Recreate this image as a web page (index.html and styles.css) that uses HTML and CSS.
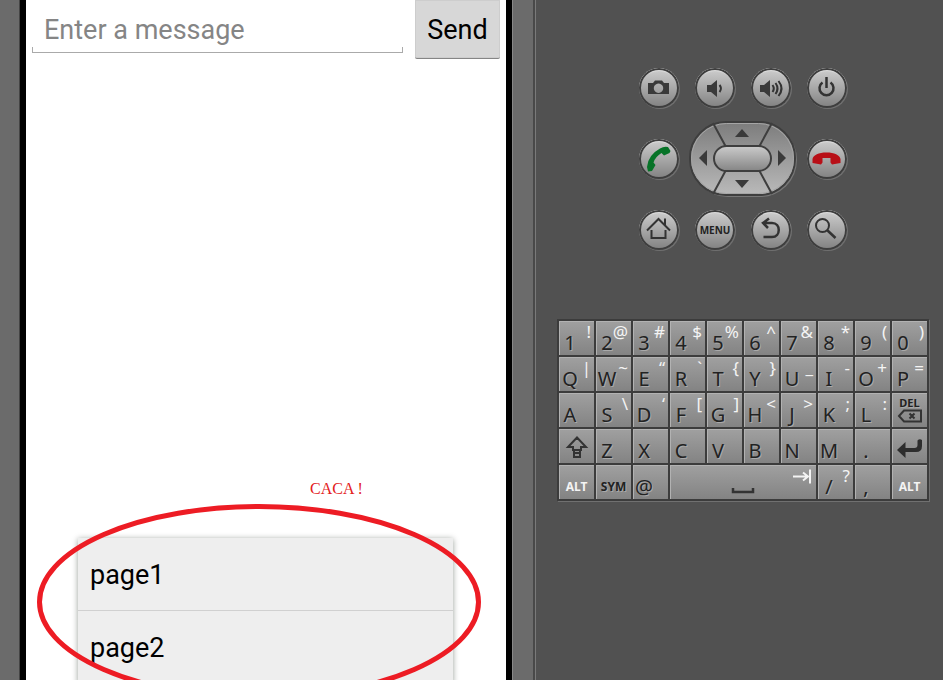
FILE: index.html
```html
<!DOCTYPE html>
<html lang="en">
<head>
  <meta charset="UTF-8">
  <title>Emulator</title>
  <link rel="stylesheet" href="styles.css">
</head>
<body>

  <div class="emulator">

    <!-- Phone -->
    <div class="phone">
      <main class="screen">
        <form class="message-bar">
          <div class="field">
            <input type="text" placeholder="Enter a message" aria-label="Enter a message">
          </div>
          <button type="button" class="send">Send</button>
        </form>

        <div class="content">
          <p class="note">CACA !</p>
        </div>

        <div class="popup">
          <button class="popup-item">page1</button>
          <button class="popup-item">page2</button>
          <svg class="circle-mark" viewBox="0 0 444 196" aria-hidden="true">
            <ellipse cx="222" cy="98" rx="219.500" ry="95.500"/>
          </svg>
        </div>
      </main>
    </div>

    <!-- Hardware controls -->
    <div class="panel">
      <div class="controls">
        <button class="round" aria-label="Camera">
          <svg viewBox="0 0 40 40"><path class="solid" fill-rule="evenodd" d="M9 15h5l2-2.500h7l2 2.500h5v11H9zM19.500 15.500a4.700 4.700 0 1 0 .01 0z"/></svg>
        </button>
        <button class="round" aria-label="Volume down">
          <svg viewBox="0 0 40 40"><path class="solid" d="M12 17h4l6-5v17l-6-5h-4z"/><path class="line" d="M24.500 17q3 3.500 0 7"/></svg>
        </button>
        <button class="round" aria-label="Volume up">
          <svg viewBox="0 0 40 40"><path class="solid" d="M9 17h4l6-5v17l-6-5H9z"/><path class="line" d="M21.500 17q2.500 3.500 0 7M24.500 15q4 5.500 0 11M27.500 13q6 7.500 0 15"/></svg>
        </button>
        <button class="round" aria-label="Power">
          <svg viewBox="0 0 40 40"><path class="line thick" d="M15.500 14.500a7 7 0 1 0 8 0M19.500 9v11"/></svg>
        </button>

        <button class="round" aria-label="Call">
          <svg viewBox="0 0 40 40"><path class="call" d="M21 9.500q4-2.500 8-1.500l2.500 4-1 2-5.500 2.500-2.500-2.500q-6 3.500-8 9.500l2 2.500-3.500 6-4 .5-1-4.500Q9 16 21 9.500z"/></svg>
        </button>
        <div class="dpad">
          <svg viewBox="0 0 108 76" aria-hidden="true">
            <defs>
              <linearGradient id="pad" x1="0" y1="0" x2="0" y2="1">
                <stop offset="0" stop-color="#7c7c7c"/>
                <stop offset="1" stop-color="#bababa"/>
              </linearGradient>
              <linearGradient id="pill" x1="0" y1="0" x2="0" y2="1">
                <stop offset="0" stop-color="#cbcbcb"/>
                <stop offset="1" stop-color="#858585"/>
              </linearGradient>
            </defs>
            <rect x="2" y="2" width="106" height="74" rx="37" fill="#777"/>
            <rect class="edge" x="1" y="1" width="105" height="73" rx="36" fill="url(#pad)"/>
            <rect class="shine" x="2.500" y="2.500" width="102" height="70" rx="35"/>
            <path class="edge" d="M24 2l13 24M83 2L70 26M37 49L24 73M70 49l13 24"/>
            <rect class="edge" x="25" y="25" width="57" height="25" rx="12.500" fill="url(#pill)"/>
            <path class="arrow" d="M46 16h14l-7-8zM46 59h14l-7 8zM10 37l8-8v16zM97 37l-8-8v16z"/>
          </svg>
          <button class="up" aria-label="Up"></button>
          <button class="left" aria-label="Left"></button>
          <button class="ok" aria-label="Select"></button>
          <button class="right" aria-label="Right"></button>
          <button class="down" aria-label="Down"></button>
        </div>
        <button class="round" aria-label="End call">
          <svg viewBox="0 0 40 40"><path class="hangup" d="M5.500 20c1-4 6-6.500 14-6.500s13 2.500 14 6.500v4l-8.500 1.500-1.500-2v-4.500h-8v4.500l-1.500 2L5.500 24z"/></svg>
        </button>

        <button class="round" aria-label="Home">
          <svg viewBox="0 0 40 40"><path class="line" d="M8 20.500L19.500 9 31 20.500M26 15V8.500M12.500 20v8h14v-8"/></svg>
        </button>
        <button class="round">MENU</button>
        <button class="round" aria-label="Back">
          <svg viewBox="0 0 40 40"><path class="line thick" d="M18 8.500l-6 4.500 5 5M12 13h9c9 0 9 14 0 14h-8.500"/></svg>
        </button>
        <button class="round" aria-label="Search">
          <svg viewBox="0 0 40 40"><circle class="line" cx="15.500" cy="15.500" r="6.500"/><path class="line thick" d="M20 20l8.500 8"/></svg>
        </button>
      </div>

      <!-- Keyboard -->
      <div class="keyboard">
        <button class="key"><span>1</span><sup>!</sup></button>
        <button class="key"><span>2</span><sup>@</sup></button>
        <button class="key"><span>3</span><sup>#</sup></button>
        <button class="key"><span>4</span><sup>$</sup></button>
        <button class="key"><span>5</span><sup>%</sup></button>
        <button class="key"><span>6</span><sup>^</sup></button>
        <button class="key"><span>7</span><sup>&amp;</sup></button>
        <button class="key"><span>8</span><sup>*</sup></button>
        <button class="key"><span>9</span><sup>(</sup></button>
        <button class="key"><span>0</span><sup>)</sup></button>

        <button class="key"><span>Q</span><sup>|</sup></button>
        <button class="key"><span>W</span><sup>~</sup></button>
        <button class="key"><span>E</span><sup>“</sup></button>
        <button class="key"><span>R</span><sup>`</sup></button>
        <button class="key"><span>T</span><sup>{</sup></button>
        <button class="key"><span>Y</span><sup>}</sup></button>
        <button class="key"><span>U</span><sup>_</sup></button>
        <button class="key"><span>I</span><sup>-</sup></button>
        <button class="key"><span>O</span><sup>+</sup></button>
        <button class="key"><span>P</span><sup>=</sup></button>

        <button class="key"><span>A</span></button>
        <button class="key"><span>S</span><sup>\</sup></button>
        <button class="key"><span>D</span><sup>‘</sup></button>
        <button class="key"><span>F</span><sup>[</sup></button>
        <button class="key"><span>G</span><sup>]</sup></button>
        <button class="key"><span>H</span><sup>&lt;</sup></button>
        <button class="key"><span>J</span><sup>&gt;</sup></button>
        <button class="key"><span>K</span><sup>;</sup></button>
        <button class="key"><span>L</span><sup>:</sup></button>
        <button class="key del">DEL
          <svg viewBox="0 0 26 14"><path class="line" d="M2 7l5-5.500h17v11H7zM12.500 4.500l5 5M17.500 4.500l-5 5"/></svg>
        </button>

        <button class="key" aria-label="Shift">
          <svg viewBox="0 0 35 34"><path class="line" d="M18 8.500L9 18h5v3h8v-3h5zM15 24h6v4h-6zM15 21v3M21 21v3"/></svg>
        </button>
        <button class="key"><span>Z</span></button>
        <button class="key"><span>X</span></button>
        <button class="key"><span>C</span></button>
        <button class="key"><span>V</span></button>
        <button class="key"><span>B</span></button>
        <button class="key"><span>N</span></button>
        <button class="key"><span>M</span></button>
        <button class="key"><span>.</span></button>
        <button class="key" aria-label="Enter">
          <svg viewBox="0 0 35 34"><path class="enter" d="M5 21l8.500-8v6h9q3 0 3-3v-4.500q2-2 4.500-.5v6q0 6-6 6H13.500v6z"/></svg>
        </button>

        <button class="key word light">ALT</button>
        <button class="key word">SYM</button>
        <button class="key"><span>@</span></button>
        <button class="key space" aria-label="Space">
          <svg viewBox="0 0 146 34"><path class="line thick" d="M63 23v4h20v-4"/><path class="tab" d="M123 11.500h14M133 7.500l5 4-5 4M140 4.500v14"/></svg>
        </button>
        <button class="key"><span>/</span><sup>?</sup></button>
        <button class="key"><span>,</span></button>
        <button class="key word light">ALT</button>
      </div>
    </div>

  </div>

</body>
</html>
```

FILE: styles.css
```css
* {
  box-sizing: border-box;
}
body {
  margin: 0;
  background: #515151;
  font-family: Roboto, sans-serif;
}
button {
  margin: 0;
  padding: 0;
  border: none;
  background: none;
  color: #222;
  font-family: "Noto Sans", "Open Sans", sans-serif;
  cursor: pointer;
}
svg {
  display: block;
}
.emulator {
  display: grid;
  grid-template-columns: minmax(0, 1fr) 407px;
  height: 100vh;
  overflow: hidden;
}

/* phone */
.phone {
  display: flex;
  padding: 0 23px 0 20px;
  background: #6b6b6b;
  border-right: 1px solid #7a7a7a;
  box-shadow: inset -2px 0 #494949;
}
.screen {
  flex: 1;
  display: flex;
  flex-direction: column;
  min-width: 0;
  border: solid #000;
  border-width: 0 6px;
  box-shadow: -1px 0 #444, 1px 0 #888;
  background: #fff;
}
.message-bar {
  display: flex;
  gap: 12px;
  padding: 0 6px;
}
.field {
  flex: 1;
  min-width: 0;
  height: 53px;
  background:
    linear-gradient(#aaa, #aaa) left bottom / 1px 6px no-repeat,
    linear-gradient(#aaa, #aaa) right bottom / 1px 6px no-repeat,
    linear-gradient(#aaa, #aaa) left bottom / 100% 1px no-repeat;
}
.field input {
  width: 100%;
  height: 60px;
  padding: 0 12px;
  border: none;
  outline: none;
  background: none;
  font-family: Roboto, sans-serif;
  font-size: 27px;
}
.field input::placeholder {
  color: #858585;
}
.send {
  width: 85px;
  height: 59px;
  padding-top: 2px;
  border-bottom: 1px solid #858585;
  border-radius: 0 0 2px 2px;
  background: #d7d7d7;
  box-shadow: inset 0 0 0 1px #cdcdcd;
  color: #000;
  font-family: Roboto, sans-serif;
  font-size: 27px;
}
.content {
  flex: 1;
  display: flex;
  justify-content: center;
  align-items: flex-end;
  padding: 0 0 40px 141px;
}
.note {
  margin: 0;
  color: #e3201b;
  font: 16px/18px "Liberation Serif", serif;
}
.popup {
  position: relative;
  margin: 0 53px -4px 52px;
  background: #eee;
  box-shadow: 0 1px 6px rgba(0, 20, 0, 0.4);
}
.popup-item {
  display: block;
  width: 100%;
  height: 73px;
  padding: 2px 12px 0;
  border-bottom: 1px solid #d0d0d0;
  color: #000;
  font-family: Roboto, sans-serif;
  font-size: 27px;
  text-align: left;
}
.circle-mark {
  position: absolute;
  top: -34px;
  left: -41px;
  width: 444px;
  height: 196px;
  pointer-events: none;
}
.circle-mark ellipse {
  fill: none;
  stroke: #ed1c24;
  stroke-width: 5;
}

/* hardware buttons */
.panel {
  padding: 68px 14px 0 21px;
}
.controls {
  display: grid;
  grid-template-columns: repeat(4, 56px);
  grid-template-rows: 40px 76px 40px;
  row-gap: 13px;
  justify-content: center;
  justify-items: center;
  align-items: center;
}
.round {
  width: 40px;
  height: 40px;
  border-radius: 50%;
  background: linear-gradient(#cfcfcf, #a8a8a8 50%, #808080);
  box-shadow: inset 0 0 0 2px #3e3e3e, inset 0 3px 1px #ddd, 1px 1px 0 #707070;
  font-size: 10px;
  font-weight: bold;
}
.round svg {
  width: 40px;
  height: 40px;
}
.solid {
  fill: #3a3a3a;
}
.line {
  fill: none;
  stroke: #333;
  stroke-width: 2;
}
.thick {
  stroke-width: 2.5;
}
.call {
  fill: #077328;
}
.hangup {
  fill: #b80f17;
}
.dpad {
  grid-column: span 2;
  position: relative;
  display: grid;
  grid-template: "left up right" 24px "left ok right" 28px "left down right" 24px / 25px 58px 25px;
}
.dpad svg {
  position: absolute;
  width: 108px;
  height: 76px;
}
.dpad button {
  position: relative;
}
.up { grid-area: up; }
.down { grid-area: down; }
.left { grid-area: left; }
.right { grid-area: right; }
.ok { grid-area: ok; }
.edge {
  stroke: #3e3e3e;
  stroke-width: 2;
}
.shine {
  fill: none;
  stroke: #a5a5a5;
}
.arrow {
  fill: #3a3a3a;
}

/* keyboard */
.keyboard {
  display: grid;
  grid-template-columns: repeat(10, 1fr);
  grid-auto-rows: 34px;
  gap: 2px;
  margin-top: 69px;
  padding: 2px;
  background: #3c3c3c;
  box-shadow: 1px 1px 0 #707070;
}
.key {
  display: grid;
  grid-template: 34px / 100%;
  min-width: 0;
  background: linear-gradient(#a0a0a0, #838383);
  box-shadow: inset 1px 1px #b2b2b2;
  font-size: 20px;
  text-shadow: 1px 1px #aaa;
}
.key span,
.key sup,
.key svg {
  grid-area: 1 / 1;
}
.key span {
  display: flex;
  justify-content: center;
  width: 22px;
  line-height: 44px;
}
.key sup {
  justify-self: end;
  padding-right: 3px;
  color: #f4f4f4;
  font-size: 17px;
  line-height: 22px;
  text-shadow: none;
}
.key svg {
  width: 100%;
  height: 34px;
}
.space {
  grid-column: span 4;
}
.word {
  font-size: 12px;
  font-weight: bold;
  line-height: 44px;
}
.light {
  color: #f4f4f4;
  text-shadow: none;
}
.key.del {
  display: flex;
  flex-direction: column;
  align-items: center;
  padding-top: 3px;
  font-size: 11px;
  font-weight: bold;
  line-height: 13px;
}
.del svg {
  width: 26px;
  height: 14px;
}
.enter {
  fill: #2d2d2d;
}
.tab {
  fill: none;
  stroke: #f4f4f4;
  stroke-width: 2;
}
```
